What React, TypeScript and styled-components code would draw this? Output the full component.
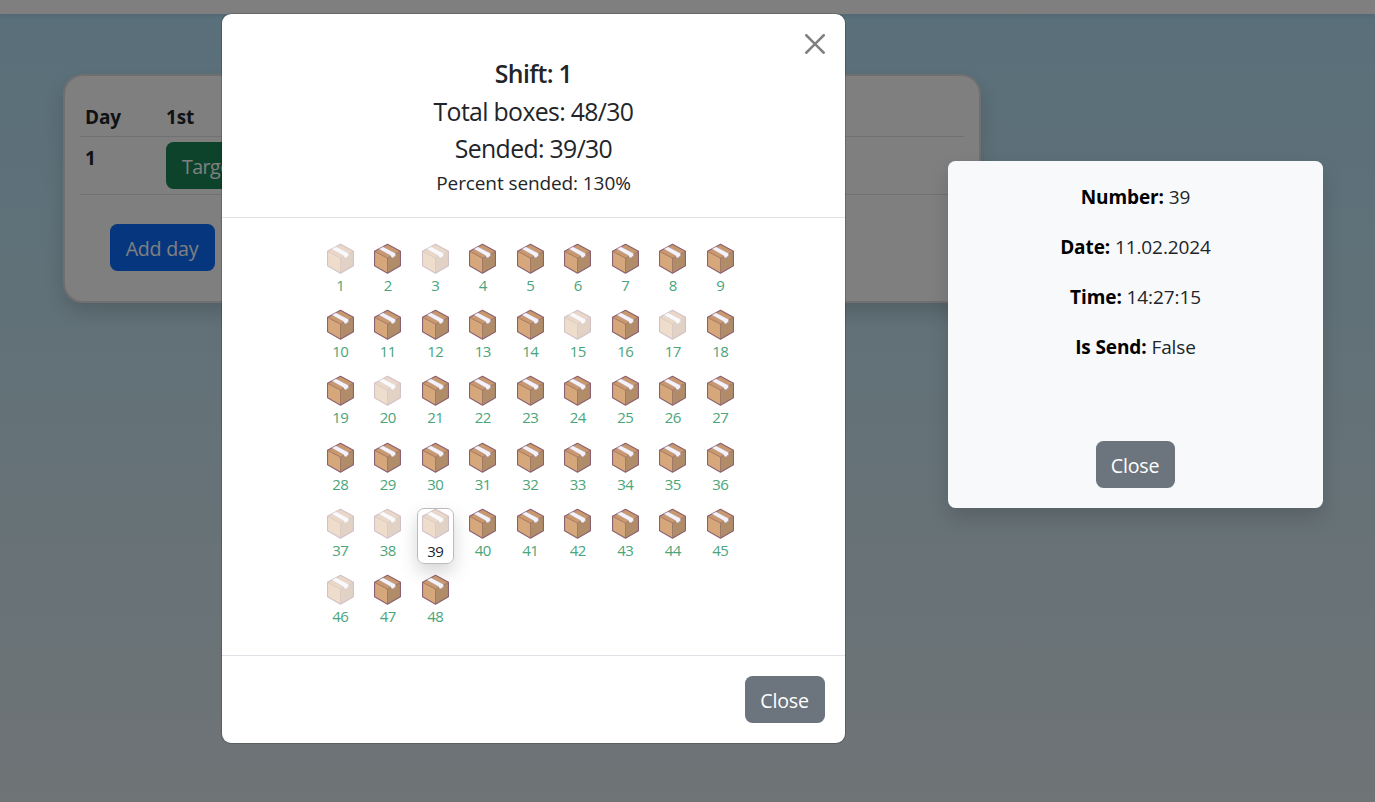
import React from "react";
import styled, { createGlobalStyle } from "styled-components";

const GlobalStyle = createGlobalStyle`
  *, *::before, *::after { box-sizing: border-box; }
  html, body, #root { height: 100%; }
  body {
    margin: 0;
    overflow: hidden;
    font-family: "Open Sans", "Noto Sans", sans-serif;
    font-size: 19px;
    line-height: 30px;
    color: #212529;
    letter-spacing: -0.1px;
  }
  p, h1, h2, h3 { margin: 0; }
`;

const Page = styled.div`
  position: relative;
  height: 802px;
  overflow: hidden;
  background: linear-gradient(#b2dff4, #dee8ec);
`;

const TopBar = styled.header`
  height: 14px;
  background: #fff;
  box-shadow: 0 2px 5px rgba(0, 0, 0, 0.08);
`;

const Card = styled.section`
  width: 918px;
  height: 229px;
  margin: 60px 0 0 63.25px;
  padding: 21px 15px 0 14.75px;
  border: 2px solid #dedede;
  border-radius: 20px;
  background: #fff;
  box-shadow: 0 10px 20px rgba(0, 0, 0, 0.15);
`;

const Table = styled.div`
  display: grid;
  grid-template-columns: 81px 1fr;
`;

const HeadCell = styled.div`
  height: 40px;
  padding: 5px;
  border-bottom: 1px solid #dee2e6;
  font-weight: 700;
`;

const Cell = styled.div`
  height: 58px;
  padding: 5px;
  border-bottom: 1px solid #dee2e6;
  line-height: 32px;
  font-weight: 700;
`;

const Button = styled.button<{ $color: string; $width: number }>`
  display: block;
  width: ${(p) => p.$width}px;
  height: 47px;
  padding: 3px 1px 0 0;
  border: 0;
  border-radius: 7.5px;
  background: ${(p) => p.$color};
  color: #fff;
  font: 400 19.6px/30px "Open Sans", "Noto Sans", sans-serif;
  letter-spacing: -0.2px;
`;

const TargetButton = styled(Button)`
  padding-left: 16px;
  text-align: left;
  letter-spacing: -0.6px;
`;

const AddRow = styled.div`
  padding: 29px 0 0 30px;
`;

const Backdrop = styled.div`
  position: absolute;
  inset: 0;
  background: rgba(0, 0, 0, 0.5);
`;

const Modal = styled.div`
  position: absolute;
  top: 13px;
  left: 221px;
  width: 625px;
  height: 731px;
  display: flex;
  flex-direction: column;
  border: 1px solid rgba(0, 0, 0, 0.175);
  border-radius: 10px;
  background: #fff;
  background-clip: padding-box;
`;

const ModalHeader = styled.div`
  position: relative;
  height: 204px;
  padding-top: 41px;
  border-bottom: 1px solid #dee2e6;
  text-align: center;
`;

const Line = styled.h2<{ $bold?: boolean }>`
  height: 37.5px;
  font-size: 24.8px;
  line-height: 37.5px;
  font-weight: ${(p) => (p.$bold ? 600 : 400)};
  letter-spacing: -0.65px;
`;

const SmallLine = styled.p`
  font-size: 19px;
  line-height: 30px;
`;

const CloseIcon = styled.button`
  position: absolute;
  top: 20px;
  right: 20px;
  width: 20px;
  height: 20px;
  padding: 0;
  border: 0;
  background: none;
  svg { display: block; }
`;

const BoxGrid = styled.div`
  flex: 1;
  display: grid;
  grid-template-columns: repeat(9, 37.5px);
  grid-auto-rows: 56.2px;
  gap: 10px;
  align-content: start;
  padding: 25px 0 0 99.5px;
`;

const BoxCell = styled.div<{ $selected: boolean }>`
  display: flex;
  flex-direction: column;
  align-items: center;
  border: 1px solid ${(p) => (p.$selected ? "#bcbcbc" : "transparent")};
  border-radius: 7px;
  color: ${(p) => (p.$selected ? "#212529" : "#4aa57a")};
  box-shadow: ${(p) => (p.$selected ? "0 8px 18px rgba(0, 0, 0, 0.17)" : "none")};
`;

const BoxSvg = styled.svg<{ $pale: boolean }>`
  flex: none;
  width: 29px;
  height: 31px;
  margin: -1px 0 0 0.2px;
  opacity: ${(p) => (p.$pale ? 0.38 : 1)};
`;

const BoxNumber = styled.span<{ $selected: boolean }>`
  margin-top: ${(p) => (p.$selected ? 1 : 0)}px;
  font-size: 15px;
  line-height: 22px;
  letter-spacing: -0.5px;
`;

const ModalFooter = styled.div`
  height: 88px;
  padding: 20px 20px 0 0;
  border-top: 1px solid #dee2e6;
  display: flex;
  justify-content: flex-end;
  align-items: flex-start;
`;

const InfoPanel = styled.aside`
  position: absolute;
  top: 161px;
  left: 948px;
  width: 375px;
  height: 347px;
  display: flex;
  flex-direction: column;
  align-items: center;
  padding-top: 21px;
  border-radius: 7.5px;
  background: #f8f9fb;
  box-shadow: 0 10px 20px rgba(0, 0, 0, 0.15);

  & > button { margin-top: 59px; }
`;

const InfoLine = styled.p`
  height: 50px;
  font-size: 19px;
  b { color: #000; }
`;

const faded = new Set([1, 3, 15, 17, 20, 37, 38, 39, 46]);
const selectedBox = 39;
const boxes = Array.from({ length: 48 }, (_, i) => i + 1);

const BoxIcon = ({ pale }: { pale: boolean }) => (
  <BoxSvg $pale={pale} viewBox="0 0 30 31" preserveAspectRatio="none">
    <path d="M1.6 8.3 15 15.2V30.2L1.6 22.8Z" fill="#d6a77a" />
    <path d="M28.4 8.3 15 15.2V30.2L28.4 22.8Z" fill="#b18c68" />
    <path d="M15 1.3 28.4 8.3 15 15.2 1.6 8.3Z" fill="#c9986d" />
    <path d="M1.6 8.3 15 15.2 28.4 8.3M15 15.2V30" fill="none" stroke="#946a5c" strokeWidth="0.8" />
    <path d="M15 1.3 28.4 8.3V22.8L15 30.2 1.6 22.8V8.3Z" fill="none" stroke="#8a6070" strokeWidth="1.1" strokeLinejoin="round" />
    <path d="M6 6 10.4 3.7 23.3 10.3V13.2L22 13.4 21 15 18.8 14.3 18.3 12.7Z" fill="#f4f2fa" stroke="#a58a9a" strokeWidth="0.4" />
  </BoxSvg>
);

export default function App() {
  return (
    <>
      <GlobalStyle />
      <Page>
        <TopBar />
        <Card>
          <Table>
            <HeadCell>Day</HeadCell>
            <HeadCell>1st</HeadCell>
            <Cell>1</Cell>
            <Cell>
              <TargetButton $color="#198754" $width={130}>Target</TargetButton>
            </Cell>
          </Table>
          <AddRow>
            <Button $color="#0d6efd" $width={105}>Add day</Button>
          </AddRow>
        </Card>
        <Backdrop />
        <Modal>
          <ModalHeader>
            <CloseIcon aria-label="Close">
              <svg width="20" height="20" viewBox="0 0 16 16" fill="#808080">
                <path d="M.293.293a1 1 0 0 1 1.414 0L8 6.586 14.293.293a1 1 0 1 1 1.414 1.414L9.414 8l6.293 6.293a1 1 0 0 1-1.414 1.414L8 9.414l-6.293 6.293a1 1 0 0 1-1.414-1.414L6.586 8 .293 1.707a1 1 0 0 1 0-1.414z" />
              </svg>
            </CloseIcon>
            <Line $bold>Shift: 1</Line>
            <Line>Total boxes: 48/30</Line>
            <Line>Sended: 39/30</Line>
            <SmallLine>Percent sended: 130%</SmallLine>
          </ModalHeader>
          <BoxGrid>
            {boxes.map((n) => (
              <BoxCell key={n} $selected={n === selectedBox}>
                <BoxIcon pale={faded.has(n)} />
                <BoxNumber $selected={n === selectedBox}>{n}</BoxNumber>
              </BoxCell>
            ))}
          </BoxGrid>
          <ModalFooter>
            <Button $color="#6c757d" $width={80}>Close</Button>
          </ModalFooter>
        </Modal>
        <InfoPanel>
          <InfoLine><b>Number:</b> 39</InfoLine>
          <InfoLine><b>Date:</b> 11.02.2024</InfoLine>
          <InfoLine><b>Time:</b> 14:27:15</InfoLine>
          <InfoLine><b>Is Send:</b> False</InfoLine>
          <Button $color="#6c757d" $width={79}>Close</Button>
        </InfoPanel>
      </Page>
    </>
  );
}
